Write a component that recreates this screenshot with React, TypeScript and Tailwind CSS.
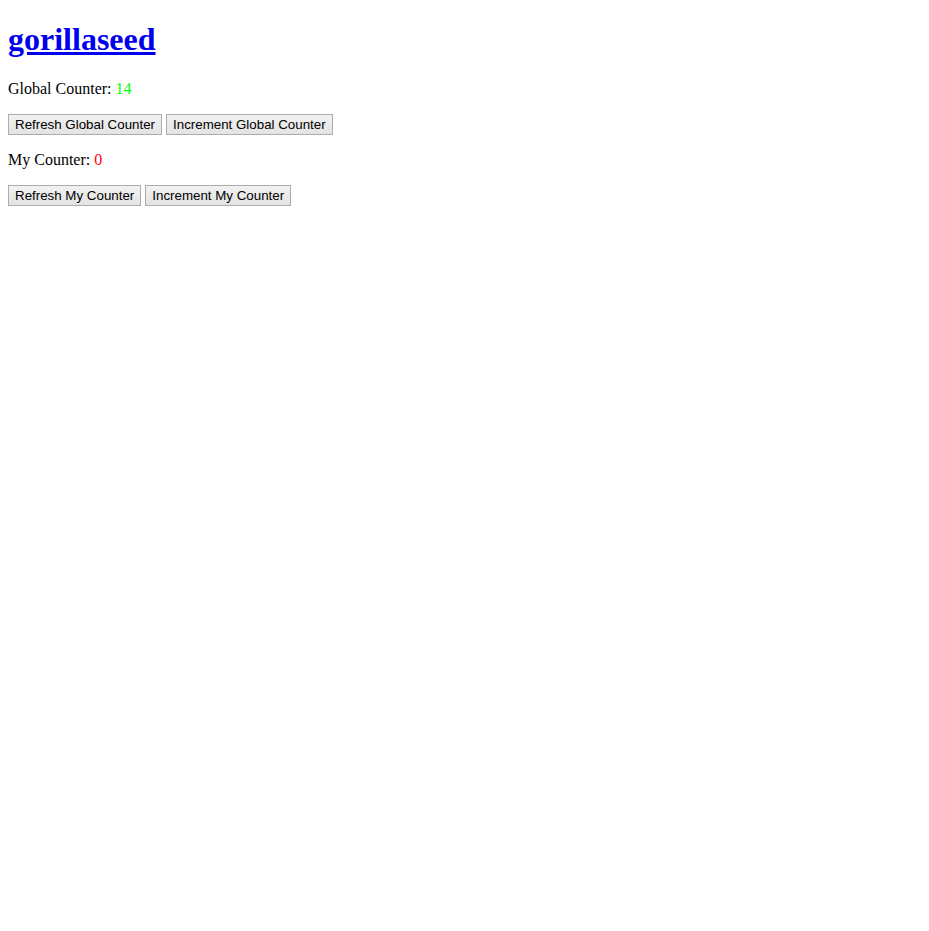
import React from 'react';

const btn =
    "h-[21px] px-[6px] border border-[#adadad] bg-gradient-to-b from-[#f2f2f2] to-[#e3e3e3] text-[13.33px] leading-[15px] text-black font-['Liberation_Sans',Arial,sans-serif] align-middle";

const App = () => {
    const [globalCount, setGlobalCount] = React.useState(14);
    const [myCount, setMyCount] = React.useState(0);

    return (
        <div className="min-h-screen bg-white px-2 pt-[21px] font-['Liberation_Serif','Times_New_Roman',serif] text-base text-black">
            <h1 className="text-[32px] font-bold leading-[37px] mb-[22px]">
                <a href="#" className="text-[#0000ee] underline">gorillaseed</a>
            </h1>
            <p className="leading-[18px] mb-4">
                Global Counter: <span className="text-[#00ff00]">{globalCount}</span>
            </p>
            <div className="flex gap-1 mb-4">
                <button className={btn} onClick={() => setGlobalCount(globalCount)}>Refresh Global Counter</button>
                <button className={btn} onClick={() => setGlobalCount(globalCount + 1)}>Increment Global Counter</button>
            </div>
            <p className="leading-[18px] mb-4">
                My Counter: <span className="text-[#ff0000]">{myCount}</span>
            </p>
            <div className="flex gap-1">
                <button className={btn} onClick={() => setMyCount(myCount)}>Refresh My Counter</button>
                <button className={btn} onClick={() => setMyCount(myCount + 1)}>Increment My Counter</button>
            </div>
        </div>
    );
};

export default App;
